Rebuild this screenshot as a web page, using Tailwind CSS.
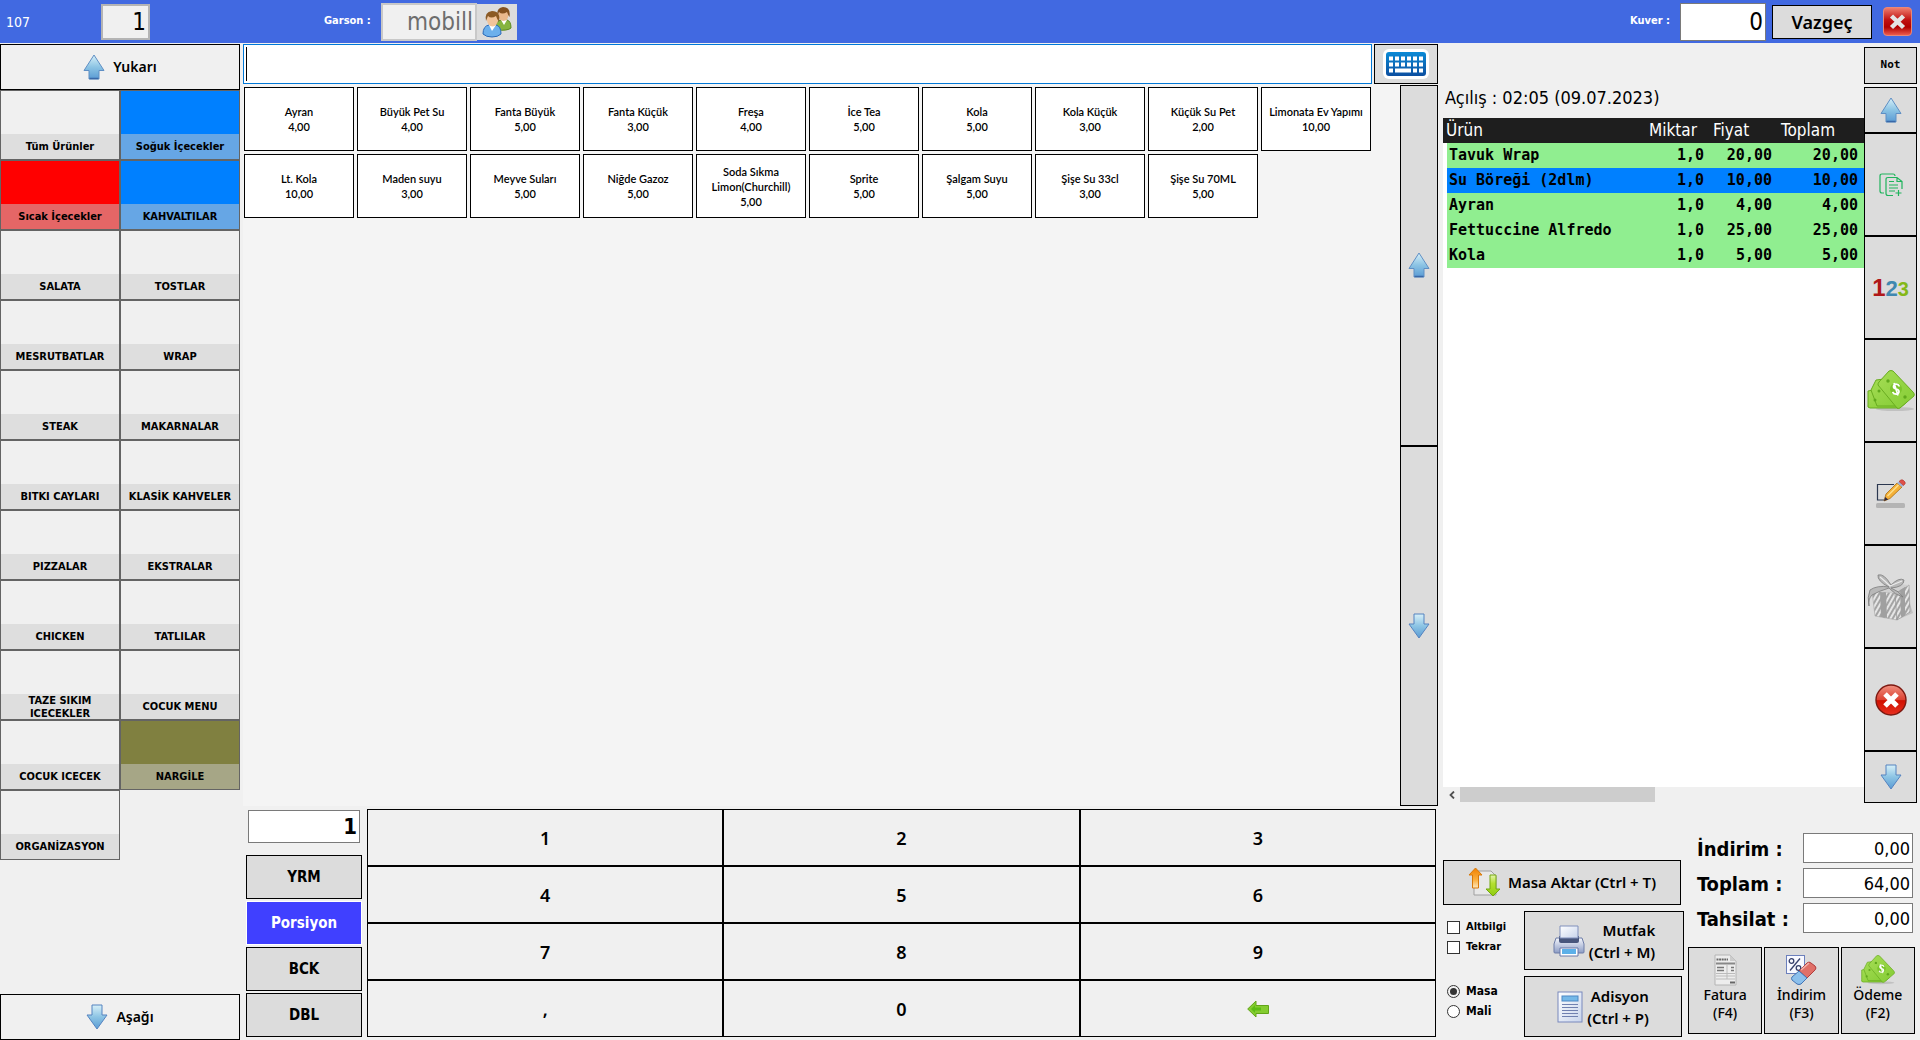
<!DOCTYPE html>
<html lang="tr">
<head>
<meta charset="utf-8">
<meta name="viewport" content="width=device-width, initial-scale=1">
<title>Adisyon</title>
<script src="https://cdn.jsdelivr.net/npm/@tailwindcss/browser@4"></script>
</head>
<body class="flex min-h-screen flex-col bg-[#f0f0f0] font-['DejaVu_Sans_Condensed','DejaVu_Sans',sans-serif] text-black">

<!-- Shared icons -->
<svg class="absolute size-0" aria-hidden="true">
  <defs>
    <linearGradient id="gBlue" x1="0" y1="0" x2="0" y2="1"><stop offset="0" stop-color="#d8f0f8"/><stop offset=".5" stop-color="#8cc4e4"/><stop offset="1" stop-color="#5a9bd4"/></linearGradient>
    <linearGradient id="gRed" x1="0" y1="0" x2="0" y2="1"><stop offset="0" stop-color="#f08070"/><stop offset=".45" stop-color="#c01010"/><stop offset=".7" stop-color="#b00000"/><stop offset="1" stop-color="#f06050"/></linearGradient>
    <linearGradient id="gBall" x1="0" y1="0" x2="0" y2="1"><stop offset="0" stop-color="#f09080"/><stop offset=".5" stop-color="#dc4030"/><stop offset=".52" stop-color="#d01000"/><stop offset="1" stop-color="#e83020"/></linearGradient>
    <linearGradient id="gKey" x1="0" y1="0" x2="0" y2="1"><stop offset="0" stop-color="#0a8ad6"/><stop offset="1" stop-color="#0c4fa0"/></linearGradient>
    <linearGradient id="gOrange" x1="0" y1="0" x2="0" y2="1"><stop offset="0" stop-color="#f08000"/><stop offset=".6" stop-color="#fbb040"/><stop offset="1" stop-color="#fde8c0"/></linearGradient>
    <linearGradient id="gLime" x1="0" y1="0" x2="0" y2="1"><stop offset="0" stop-color="#e4f4b0"/><stop offset=".4" stop-color="#b4e030"/><stop offset="1" stop-color="#90cc10"/></linearGradient>
    <linearGradient id="gPaper" x1="0" y1="0" x2="1" y2="1"><stop offset="0" stop-color="#fff"/><stop offset="1" stop-color="#c8d4ec"/></linearGradient>
    <linearGradient id="gMetal" x1="0" y1="0" x2="0" y2="1"><stop offset="0" stop-color="#f4f6fc"/><stop offset="1" stop-color="#8c9cc4"/></linearGradient>
    <linearGradient id="gNote" x1="0" y1="0" x2="1" y2="1"><stop offset="0" stop-color="#a4dc54"/><stop offset="1" stop-color="#84cc34"/></linearGradient>
    <pattern id="stripes" width="4" height="4" patternUnits="userSpaceOnUse" patternTransform="rotate(30)"><rect width="4" height="4" fill="#e6e6e6"/><rect width="2" height="4" fill="#a4a4a4"/></pattern>
  </defs>
  <symbol id="up" viewBox="0 0 22 26"><path d="M11 1 21 16.500H16V25H6V16.500H1Z" fill="url(#gBlue)" stroke="#5f8fc4"/><path d="M6.500 24.500H15.500" stroke="#3a68a8" stroke-width="1.500"/></symbol>
  <symbol id="down" viewBox="0 0 22 26"><path d="M11 25 21 11H16V1H6V11H1Z" fill="url(#gBlue)" stroke="#5583c0"/></symbol>
  <symbol id="cash" viewBox="0 0 48 42">
    <ellipse cx="28" cy="39" rx="19" ry="2" fill="#000" opacity=".12"/>
    <path d="M1 21 20 17 34 33 31 38H3Q0 38 1 34Z" fill="url(#gNote)" stroke="#69ac20"/>
    <path d="M9 10 26 8 40 32 35 36 10 36 4 20Z" fill="url(#gNote)" stroke="#69ac20"/>
    <path d="M22 1Q24 0 26 1L46 22Q48 24 47 26L33 38Q31 39 30 38L11 15Q11 13 12 12Z" fill="url(#gNote)" stroke="#69ac20"/>
    <circle cx="29" cy="19" r="6" fill="#7cc42c"/>
    <path d="M32.500 16.500C31 13 26 13.500 26.500 17C27 20 32 18 32 21.500C32 25 27 25 25.500 22M27 13 31 25.500" fill="none" stroke="#fff" stroke-width="1.700"/>
    <circle cx="21" cy="11" r="1.700" fill="#60a81c"/><circle cx="38" cy="27" r="1.700" fill="#60a81c"/><circle cx="8" cy="30" r="1.500" fill="#60a81c"/><circle cx="12" cy="21" r="1.500" fill="#60a81c"/>
  </symbol>
</svg>

<header class="flex h-[43px] items-center bg-[#4169e1] pr-2 text-white">
  <span class="w-[101px] pl-1.5 text-sm">107</span>
  <input aria-label="Kişi" value="1" class="h-9 w-[49px] border-2 border-[#b4b4b4] bg-[#f0f0f0] pr-0.5 text-right text-2xl text-black">
  <label for="garson" class="ml-[174px] w-[57px] text-[11px] font-bold">Garson :</label>
  <input id="garson" value="mobill" class="h-[38px] w-24 border-2 border-[#c8c8c8] bg-[#f0f0f0] pr-0.5 text-right text-2xl text-[#6d6d6d]">
  <button aria-label="Garson seç" class="flex h-9 w-10 items-center justify-center bg-[#dcdcdc]">
    <svg class="size-8" viewBox="0 0 32 32">
      <path d="M15 23Q14 15 20 14H26Q30 15 30 22Q27 25 15 24Z" fill="#86b440" stroke="#5c8a20"/>
      <path d="m20 14 3 5 3-5Z" fill="#fff"/>
      <ellipse cx="22.500" cy="9" rx="5" ry="6" fill="#eab88c"/>
      <path d="M16.500 10Q15 2 22 1Q30 1 28.500 11Q27 9 26 6Q21 9 18 6Z" fill="#83501f"/>
      <path d="M2 28Q2 20 8 19H15Q20 20 20 28Q17 31 11 31T2 28Z" fill="#6cb0ec" stroke="#2a6ab8"/>
      <path d="m8 19 3 6 4-6Z" fill="#fff"/>
      <ellipse cx="11.500" cy="14" rx="5.500" ry="6.500" fill="#f2c49a"/>
      <path d="M5 15Q3 6 11 5Q20 5 18 16Q16 13 15 10Q10 13 7 10Z" fill="#8c5a24"/>
    </svg>
  </button>
  <label for="kuver" class="ml-auto w-[50px] text-[11px] font-bold">Kuver :</label>
  <input id="kuver" value="0" class="h-[38px] w-[86px] border border-[#7a7a7a] bg-white pr-0.5 text-right text-2xl text-black">
  <button class="ml-1.5 h-[34px] w-[100px] border border-black bg-[#dcdcdc] font-['Noto_Sans',sans-serif] text-lg font-semibold leading-none text-black">Vazgeç</button>
  <button aria-label="Kapat" class="ml-[11px]">
    <svg class="size-[29px]" viewBox="0 0 29 29"><rect x=".5" y=".5" width="28" height="28" rx="3.500" fill="url(#gRed)" stroke="#e88878"/><path d="m8.500 9 12 11.500m0-11.500-12 11.500" stroke="#e4e4e4" stroke-width="4.500"/></svg>
  </button>
</header>

<main class="grid flex-1 grid-cols-[240px_minmax(0,1fr)_474px] pr-[3px] pt-px">

  <!-- Categories -->
  <nav class="flex flex-col" aria-label="Kategoriler">
    <button class="flex h-[46px] items-center justify-center gap-2 border border-black font-['Noto_Sans',sans-serif] text-sm font-semibold"><svg class="h-[26px] w-[22px]"><use href="#up"/></svg>Yukarı</button>
    <div class="grid grid-cols-2 text-[11px] font-bold leading-[13px] [&>button]:flex [&>button]:h-[70px] [&>button]:items-end [&>button]:border [&>button]:border-[#646464] [&_span]:flex [&_span]:h-[25px] [&_span]:w-full [&_span]:items-center [&_span]:justify-center [&_span]:bg-[#ccc]/50">
      <button><span>Tüm Ürünler</span></button>
      <button class="bg-[#0080ff]"><span>Soğuk İçecekler</span></button>
      <button class="bg-[#ff0000]"><span>Sıcak İçecekler</span></button>
      <button class="bg-[#0080ff]"><span>KAHVALTILAR</span></button>
      <button><span>SALATA</span></button>
      <button><span>TOSTLAR</span></button>
      <button><span>MESRUTBATLAR</span></button>
      <button><span>WRAP</span></button>
      <button><span>STEAK</span></button>
      <button><span>MAKARNALAR</span></button>
      <button><span>BITKI CAYLARI</span></button>
      <button><span>KLASİK KAHVELER</span></button>
      <button><span>PIZZALAR</span></button>
      <button><span>EKSTRALAR</span></button>
      <button><span>CHICKEN</span></button>
      <button><span>TATLILAR</span></button>
      <button><span>TAZE SIKIM<br>ICECEKLER</span></button>
      <button><span>COCUK MENU</span></button>
      <button><span>COCUK ICECEK</span></button>
      <button class="bg-[#808040]"><span>NARGİLE</span></button>
      <button><span>ORGANİZASYON</span></button>
    </div>
    <button class="mt-auto flex h-[46px] items-center justify-center gap-2 border border-black font-['Noto_Sans',sans-serif] text-sm font-semibold"><svg class="h-[26px] w-[22px]"><use href="#down"/></svg>Aşağı</button>
  </nav>

  <!-- Products and keypad -->
  <section class="flex flex-col pb-[3px] pl-[3px] pr-[5px]">
    <div class="flex h-10 gap-0.5">
      <div class="relative flex flex-1">
        <input aria-label="Ürün ara" class="min-w-0 flex-1 border border-[#0078d7] bg-white px-1 text-2xl caret-transparent outline-none">
        <span class="pointer-events-none absolute inset-y-[3px] left-[3px] w-px bg-black"></span>
      </div>
      <button aria-label="Klavye" class="flex w-16 items-center justify-center border border-black bg-[#dcdcdc]">
        <svg class="h-[30px] w-[46px]" viewBox="0 0 46 30"><rect width="46" height="30" rx="6" fill="#fff"/><rect x="3" y="3" width="40" height="24" rx="3" fill="url(#gKey)"/>
          <path d="M6 9.500H40M6 15.500H40" stroke="#fff" stroke-width="4" stroke-dasharray="4 2"/><path d="M6 21.500h4m2 0h16m2 0h4m2 0h4" stroke="#fff" stroke-width="4"/></svg>
      </button>
    </div>
    <div class="flex flex-1">
      <div class="flex flex-1 flex-wrap content-start gap-[3px] bg-[#f4f4f4] pl-px pt-[3px] font-['Lato',sans-serif] text-[11px] font-semibold leading-[15px] [&>button]:h-16 [&>button]:w-[110px] [&>button]:border [&>button]:border-black [&>button]:bg-white">
        <button>Ayran<br>4,00</button>
        <button>Büyük Pet Su<br>4,00</button>
        <button>Fanta Büyük<br>5,00</button>
        <button>Fanta Küçük<br>3,00</button>
        <button>Freşa<br>4,00</button>
        <button>İce Tea<br>5,00</button>
        <button>Kola<br>5,00</button>
        <button>Kola Küçük<br>3,00</button>
        <button>Küçük Su Pet<br>2,00</button>
        <button>Limonata Ev Yapımı<br>10,00</button>
        <button>Lt. Kola<br>10,00</button>
        <button>Maden suyu<br>3,00</button>
        <button>Meyve Suları<br>5,00</button>
        <button>Niğde Gazoz<br>5,00</button>
        <button>Soda Sıkma<br>Limon(Churchill)<br>5,00</button>
        <button>Sprite<br>5,00</button>
        <button>Şalgam Suyu<br>5,00</button>
        <button>Şişe Su 33cl<br>3,00</button>
        <button>Şişe Su 70ML<br>5,00</button>
      </div>
      <div class="flex w-[38px] flex-col pt-px [&>button]:flex [&>button]:flex-1 [&>button]:items-center [&>button]:justify-center [&>button]:border [&>button]:border-black [&>button]:bg-[#dcdcdc]">
        <button aria-label="Ürünlerde yukarı"><svg class="h-[26px] w-[22px]"><use href="#up"/></svg></button>
        <button aria-label="Ürünlerde aşağı"><svg class="h-[26px] w-[22px]"><use href="#down"/></svg></button>
      </div>
    </div>
    <div class="flex h-[231px] gap-[5px] pl-[3px] pr-0.5 pt-[3px]">
      <div class="flex w-[116px] flex-col gap-0.5 [&>button]:h-11 [&>button]:border [&>button]:border-black [&>button]:bg-[#dcdcdc] [&>button]:text-[15px] [&>button]:font-bold">
        <input aria-label="Adet" value="1" class="mx-0.5 mb-2.5 mt-px h-[33px] border border-[#7a7a7a] bg-white pr-0.5 text-right text-[22px] font-bold">
        <button>YRM</button>
        <button class="border-white! bg-[#4040ff]! text-white">Porsiyon</button>
        <button>BCK</button>
        <button>DBL</button>
      </div>
      <div class="grid flex-1 grid-cols-3 font-['Noto_Sans',sans-serif] text-lg font-semibold leading-none [&>button]:border [&>button]:border-black">
        <button>1</button><button>2</button><button>3</button>
        <button>4</button><button>5</button><button>6</button>
        <button>7</button><button>8</button><button>9</button>
        <button>,</button><button>0</button>
        <button aria-label="Sil" class="flex items-center justify-center"><svg class="h-[18px] w-[22px]" viewBox="0 0 22 18"><path d="M.700 9 9 1v4.500h12.500v8H9V17Z" fill="#84cc30" stroke="#62a418"/><path d="M4 9 8 5v2.500h6v3H8V13Z" fill="#5cbc14"/></svg></button>
      </div>
    </div>
  </section>

  <!-- Bill -->
  <aside class="flex flex-col">
    <div class="flex flex-1">
      <div class="flex flex-1 flex-col">
        <p class="h-[74px] pl-0.5 pt-10 text-lg leading-7">Açılış : 02:05 (09.07.2023)</p>
        <div class="flex-1 bg-white">
          <table class="w-full table-fixed border-separate border-spacing-0">
            <thead class="bg-[#1e1e1e] text-left text-[17px] leading-[25px] text-white [&_th]:p-0 [&_th]:font-normal">
              <tr><th class="pl-[3px]!">Ürün</th><th class="w-16">Miktar</th><th class="w-[68px]">Fiyat</th><th class="w-[83px]">Toplam</th></tr>
            </thead>
            <tbody class="bg-[#90ee90] text-right font-['DejaVu_Sans_Mono',monospace] text-[15px] font-bold leading-[25px] [&_td]:p-0 [&_td]:pr-[9px] [&_td:first-child]:border-l-4 [&_td:first-child]:border-white [&_td:first-child]:pl-0.5 [&_td:first-child]:text-left [&_td:last-child]:pr-1.5">
              <tr><td>Tavuk Wrap</td><td>1,0</td><td>20,00</td><td>20,00</td></tr>
              <tr class="bg-[#0080ff]"><td>Su Böreği (2dlm)</td><td>1,0</td><td>10,00</td><td>10,00</td></tr>
              <tr><td>Ayran</td><td>1,0</td><td>4,00</td><td>4,00</td></tr>
              <tr><td>Fettuccine Alfredo</td><td>1,0</td><td>25,00</td><td>25,00</td></tr>
              <tr><td>Kola</td><td>1,0</td><td>5,00</td><td>5,00</td></tr>
            </tbody>
          </table>
        </div>
        <div class="mb-px flex h-[15px] items-center">
          <button aria-label="Sola kaydır" class="flex w-[17px] justify-center"><svg class="h-2 w-1.5" viewBox="0 0 6 8"><path d="M5 .5 1.500 4 5 7.500" fill="none" stroke="#505050" stroke-width="1.800"/></svg></button>
          <div class="h-full w-[195px] bg-[#cdcdcd]"></div>
        </div>
      </div>
      <div class="flex w-[53px] flex-col pt-[3px] [&>button]:flex [&>button]:items-center [&>button]:justify-center [&>button]:border [&>button]:border-black [&>button]:bg-[#dcdcdc]">
        <button class="mb-[3px] h-[37px] font-['DejaVu_Sans_Mono',monospace] text-[11px] font-bold">Not</button>
        <button aria-label="Yukarı" class="h-[46px]"><svg class="h-[26px] w-[22px]"><use href="#up"/></svg></button>
        <button aria-label="Kopyala" class="flex-1"><svg class="size-6" viewBox="0 0 24 24" fill="none" stroke="#1fb45c" stroke-width="1.200"><path d="M5 20H3Q1 20 1 18V3Q1 1 3 1H14Q16 1 16 3"/><path d="M14 22.500H9Q7 22.500 7 20.500V6.500Q7 4.500 9 4.500H18L23 8.500V16M18 4.500V8.500H23"/><path d="M10 8.500H15M10 12H19M10 15H19M10 18H16M19.500 17V23M16.500 20H22.500"/></svg></button>
        <button aria-label="Miktar" class="flex-1"><span class="flex items-baseline font-['Liberation_Sans',sans-serif] font-bold leading-none"><span class="text-2xl text-[#b01818]">1</span><span class="text-[22px] text-[#4088b0]">2</span><span class="text-xl text-[#84b818]">3</span></span></button>
        <button aria-label="Ödeme al" class="flex-1"><svg class="h-[42px] w-12"><use href="#cash"/></svg></button>
        <button aria-label="Düzenle" class="flex-1"><svg class="h-[30px] w-8" viewBox="0 0 32 30"><rect x="1" y="24" width="29" height="5" rx="1.500" fill="#b4b4b4"/><path d="M19 5.500H2.500V21H10" fill="none" stroke="#2c3850" stroke-width="1.200"/><path d="M9 22 11 15 22 4 27 8 15 19.500Z" fill="#f4b038" stroke="#a86c10" stroke-width=".8"/><path d="m12.500 17 11-11" stroke="#fde08c" stroke-width="1.500"/><path d="M9 22l1.200-4 3 2.600Z" fill="#302840"/><path d="m22 4 2-1.500 4.500 4L27 8Z" fill="#a0b4d8"/><path d="M24 2.500Q26 0 28 1L30 3Q31 4.500 28.500 6.500Z" fill="#e05048" stroke="#a83028" stroke-width=".6"/></svg></button>
        <button aria-label="İkram" class="flex-1"><svg class="size-12" viewBox="0 0 48 48"><path d="M40 22 46 40 30 47Z" fill="#000" opacity=".12"/><path d="M5 18 28 20 30 47 8 43Z" fill="url(#stripes)" stroke="#a8a8a8" stroke-width=".6"/><path d="M28 20 42 12 43 39 30 47Z" fill="url(#stripes)" stroke="#909090" stroke-width=".6"/><path d="M5 18 20 10 42 12 28 20Z" fill="#d0d0d0"/><path d="M13 19 19 19.500 20 45 14 44ZM33 17 38 14 38 42 34 44Z" fill="#a0a0a0"/><path d="M22 14Q10 8 11 2Q17 0 24 12Q32 4 37 7Q37 14 24 15Q32 18 36 24Q28 22 22 15Q12 18 5 22Q1 26 2 33Q0 24 3 17Q10 12 22 14Z" fill="#b8b8b8" stroke="#7c7c7c" stroke-width=".8"/><path d="M13 4Q18 8 23 13Q30 10 35 8" fill="none" stroke="#ececec" stroke-width="1.200"/></svg></button>
        <button aria-label="İptal" class="flex-1"><svg class="size-8" viewBox="0 0 32 32"><circle cx="16" cy="16" r="15" fill="url(#gBall)" stroke="#7c1810" stroke-width="1.400"/><path d="m10 10 12 12m0-12L10 22" stroke="#fff" stroke-width="5"/></svg></button>
        <button aria-label="Aşağı" class="h-[52px]"><svg class="h-[26px] w-[22px]"><use href="#down"/></svg></button>
      </div>
    </div>

    <div class="flex gap-1 pb-[3px] pr-0.5 pt-[30px]">
      <div class="w-[241px] pt-[27px] font-['Noto_Sans',sans-serif]">
        <button class="flex h-[45px] w-[238px] items-center justify-center gap-2 border border-black bg-[#dcdcdc] text-[15px] font-semibold leading-none">
          <svg class="size-8" viewBox="0 0 32 32"><path d="M6 4H23L28 9V28H6Z" fill="#e8e8e8" stroke="#a0a0a0"/><path d="M7.500 1 14 8H10.500V21H4.500V8H1Z" fill="url(#gOrange)" stroke="#d87808"/><path d="M25 29 32 22H28V8H22V22H18Z" fill="url(#gLime)" stroke="#74a810"/></svg>
          Masa Aktar (Ctrl + T)
        </button>
        <div class="mt-1.5 flex">
          <div class="flex w-[81px] flex-col pl-1 pt-1.5 font-['DejaVu_Sans_Condensed','DejaVu_Sans',sans-serif] text-[11px] font-bold leading-5 [&>label]:flex [&>label]:h-5 [&>label]:items-center [&>label]:gap-1.5 [&_input]:m-0 [&_input]:size-[13px] [&_input]:appearance-none [&_input]:border [&_input]:border-[#333] [&_input]:bg-white">
            <label><input type="checkbox">Altbilgi</label>
            <label><input type="checkbox">Tekrar</label>
            <label class="mt-6 text-xs"><input type="radio" name="tip" checked class="rounded-full p-0.5 checked:bg-[#333]! checked:bg-clip-content">Masa</label>
            <label class="text-xs"><input type="radio" name="tip" class="rounded-full">Mali</label>
          </div>
          <div class="flex flex-1 flex-col gap-1.5 text-[15px] font-semibold leading-[22px] [&>button]:flex [&>button]:items-center [&>button]:justify-center [&>button]:gap-1 [&>button]:border [&>button]:border-black [&>button]:bg-[#dcdcdc] [&>button]:text-right">
            <button class="h-[59px]">
              <svg class="size-8" viewBox="0 0 32 32"><path d="M3 13H29L31 19V27Q31 28 30 28H2Q1 28 1 27V19Z" fill="url(#gMetal)" stroke="#6c7ca8"/><path d="M6 11H26V16Q26 18 24 18H8Q6 18 6 16Z" fill="#48567c"/><path d="M7 1H25V13H7Z" fill="url(#gPaper)" stroke="#8090bc"/><path d="M7 23H25V31H7Z" fill="#fff" stroke="#6878a8"/><path d="M9 24H23V29H9Z" fill="#5cb0e8"/></svg>
              <span>Mutfak<br>(Ctrl + M)</span>
            </button>
            <button class="mr-0.5 h-[61px]">
              <svg class="h-8 w-[26px]" viewBox="0 0 26 32"><rect x="1" y="1" width="24" height="30" fill="url(#gPaper)" stroke="#7888bc"/><rect x="5" y="5" width="16" height="5" fill="#74b8e8" stroke="#4c88c4"/><path d="M5 13.500H21M5 16.500H21M5 19.500H21M5 22.500H21M5 25.500H21" stroke="#7080b0"/></svg>
              <span>Adisyon<br>(Ctrl + P)</span>
            </button>
          </div>
        </div>
      </div>

      <div class="flex flex-1 flex-col">
        <div class="grid grid-cols-[1fr_110px] gap-y-[5px] pl-[9px] pr-0.5 text-xl leading-none [&>label]:pt-1.5 [&>label]:font-bold [&>input]:h-[30px] [&>input]:min-w-0 [&>input]:border [&>input]:border-[#7a7a7a] [&>input]:bg-white [&>input]:pr-0.5 [&>input]:text-right [&>input]:text-lg">
          <label for="indirim">İndirim :</label><input id="indirim" value="0,00">
          <label for="toplam">Toplam :</label><input id="toplam" value="64,00">
          <label for="tahsilat">Tahsilat :</label><input id="tahsilat" value="0,00">
        </div>
        <div class="mb-[3px] mt-auto grid grid-cols-3 gap-0.5 font-['Noto_Sans',sans-serif] text-sm font-medium leading-[18px] [&>button]:flex [&>button]:h-[87px] [&>button]:flex-col [&>button]:items-center [&>button]:border [&>button]:border-black [&>button]:bg-[#dcdcdc] [&>button]:pt-1.5">
          <button><svg class="size-8" viewBox="0 0 32 32"><path d="M6 1H21L27 7V31H6Z" fill="#ededed" stroke="#b4b4b4"/><path d="M21 1V7H27Z" fill="#ccc"/><path d="M7.500 5.500H19" stroke="#686868" stroke-width="2" stroke-dasharray="2 .6"/><path d="M7 9.500H26" stroke="#888" stroke-width="2"/><path d="M8 13.500h7m7 0h3M8 16.500h7m7 0h3" stroke="#777" stroke-width="1.500"/><path d="M7 19.500H26M7 22H26M7 25H26M18 10V25" stroke="#bbb"/><path d="M21 28.500H26" stroke="#666" stroke-width="2"/></svg>Fatura<br>(F4)</button>
          <button><svg class="size-8" viewBox="0 0 32 32"><rect x="1.500" y="1.500" width="18" height="18" fill="#f8f9ff" stroke="#6c80bc"/><g fill="none" stroke="#35406c" stroke-width="1.300"><circle cx="6.500" cy="7" r="2.300"/><circle cx="13.500" cy="14" r="2.300"/><path d="M15 4.500 5 16.500"/></g><path d="M14 17 22 9Q24 7 26 9L30 12Q32 14 30 16L22 24Z" fill="#e07068" stroke="#b03c3c"/><path d="M14 17 22 24 16 30Q14 31 12 30L7 26Q6 24 7 23Z" fill="#8cc0ec" stroke="#4474b4"/><path d="m16 16 8-7" stroke="#f4b4ac" stroke-width="1.500"/></svg>İndirim<br>(F3)</button>
          <button><svg class="h-8 w-[34px]"><use href="#cash"/></svg>Ödeme<br>(F2)</button>
        </div>
      </div>
    </div>
  </aside>
</main>
</body>
</html>
